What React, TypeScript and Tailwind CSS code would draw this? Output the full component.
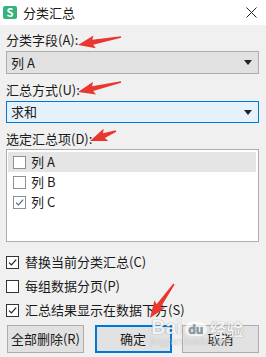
const font = '"Noto Sans CJK SC", "Liberation Sans", sans-serif';

function arrowPoints(tx: number, ty: number, px: number, py: number) {
  const dx = px - tx;
  const dy = py - ty;
  const len = Math.hypot(dx, dy);
  const ux = dx / len;
  const uy = dy / len;
  const nx = -uy;
  const ny = ux;
  const head = 15;
  const bx = px - ux * head;
  const by = py - uy * head;
  const pts = [
    [tx + nx * 0.8, ty + ny * 0.8],
    [bx + nx * 2.5, by + ny * 2.5],
    [bx - ux * 2 + nx * 6.5, by - uy * 2 + ny * 6.5],
    [px, py],
    [bx - ux * 2 - nx * 6.5, by - uy * 2 - ny * 6.5],
    [bx - nx * 2.5, by - ny * 2.5],
    [tx - nx * 0.8, ty - ny * 0.8],
  ];
  return pts.map((p) => p.join(",")).join(" ");
}

function Caret() {
  return (
    <svg width="8" height="5" viewBox="0 0 8 5">
      <path d="M0 0 H8 L4 5 Z" fill="#222" />
    </svg>
  );
}

function Check({ light }: { light?: boolean }) {
  return (
    <svg width="11" height="11" viewBox="0 0 11 11">
      <path
        d="M2 5.6 L4.4 8 L9.2 2.6"
        fill="none"
        stroke={light ? "#4a6a8a" : "#222"}
        strokeWidth="1.2"
      />
    </svg>
  );
}

function Box({ checked, light }: { checked?: boolean; light?: boolean }) {
  return (
    <div
      className={`w-[13px] h-[13px] bg-white border flex items-center justify-center ${
        light ? "border-[#8f8f8f]" : "border-[#333333]"
      }`}
    >
      {checked && <Check light={light} />}
    </div>
  );
}

function Option({ label, checked }: { label: string; checked?: boolean }) {
  return (
    <div className="h-[24px] flex items-center gap-[6px] text-[13px] text-[#1a1a1a]">
      <Box checked={checked} />
      <span>{label}</span>
    </div>
  );
}

function Btn({ label, focused }: { label: string; focused?: boolean }) {
  return (
    <div
      className={`w-[77px] h-[28px] flex items-center justify-center text-[13px] text-[#1a1a1a] bg-[#e1e1e1] ${
        focused ? "border-2 border-[#0078d7]" : "border border-[#adadad]"
      }`}
    >
      {label}
    </div>
  );
}

export default function App() {
  const arrows: [number, number, number, number][] = [
    [121, 37, 78, 45],
    [121, 82, 78, 92],
    [116, 131, 90, 141],
    [174, 284, 150, 318],
  ];

  return (
    <div
      className="relative w-[266px] h-[357px] bg-[#f0f0f0] overflow-hidden"
      style={{ fontFamily: font }}
    >
      {/* title bar */}
      <div className="h-[25px] bg-white flex items-center pl-[3px] pr-[9px]">
        <div className="w-[14px] h-[13px] rounded-[2px] bg-[#35b37b] flex items-center justify-center text-white text-[11px] leading-none font-bold">
          S
        </div>
        <span className="ml-[6px] text-[13px] text-[#1a1a1a]">分类汇总</span>
        <svg className="ml-auto" width="11" height="11" viewBox="0 0 11 11">
          <path d="M0.5 0.5 L10.5 10.5 M10.5 0.5 L0.5 10.5" stroke="#222" strokeWidth="1" />
        </svg>
      </div>

      <div className="pl-[6px] pr-[7px]">
        <div className="mt-[5px] h-[20px] leading-[20px] text-[13px] text-[#1a1a1a]">分类字段(A):</div>
        <div className="mt-[1px] h-[23px] bg-[#e1e1e1] border border-[#adadad] flex items-center pl-[4px] pr-[6px] text-[13px] text-[#1a1a1a]">
          <span>列 A</span>
          <span className="ml-auto flex">
            <Caret />
          </span>
        </div>

        <div className="mt-[6px] h-[20px] leading-[20px] text-[13px] text-[#1a1a1a]">汇总方式(U):</div>
        <div className="mt-[1px] h-[22px] bg-[#e5f1fb] border border-[#0078d7] flex items-center pl-[4px] pr-[6px] text-[13px] text-[#1a1a1a]">
          <span>求和</span>
          <span className="ml-auto flex">
            <Caret />
          </span>
        </div>

        <div className="mt-[6px] h-[20px] leading-[20px] text-[13px] text-[#1a1a1a]">选定汇总项(D):</div>
        <div className="h-[93px] bg-white border border-[#adadad] pt-[2px] pl-[1px] pr-[2px]">
          {[
            { label: "列 A", checked: false, sel: true },
            { label: "列 B", checked: false, sel: false },
            { label: "列 C", checked: true, sel: false },
          ].map((r) => (
            <div
              key={r.label}
              className={`h-[20px] flex items-center gap-[5px] pl-[5px] text-[13px] text-[#1a1a1a] ${
                r.sel ? "bg-[#e5e5e5]" : ""
              }`}
            >
              <Box checked={r.checked} light />
              <span>{r.label}</span>
            </div>
          ))}
        </div>

        <div className="mt-[8px] flex flex-col">
          <Option label="替换当前分类汇总(C)" checked />
          <Option label="每组数据分页(P)" />
          <Option label="汇总结果显示在数据下方(S)" checked />
        </div>

        <div className="mt-[3px] pl-[1px] flex justify-between">
          <Btn label="全部删除(R)" />
          <Btn label="确定" focused />
          <Btn label="取消" />
        </div>
      </div>

      {/* watermark */}
      <div className="absolute left-[151px] top-[317px] flex items-end gap-[3px] text-white/90 font-bold pointer-events-none [text-shadow:0_0_1px_rgba(0,0,0,0.5)]">
        <span className="text-[20px] leading-none" style={{ fontFamily: '"Liberation Sans", sans-serif' }}>
          Bai
        </span>
        <span className="text-[12px] leading-none mb-[1px] px-[3px] py-[1px] rounded-full bg-white/70 text-[#8a9aa8]">du</span>
        <span className="text-[17px] leading-none">经验</span>
      </div>
      <div
        className="absolute left-[150px] top-[337px] text-[10px] leading-none text-white/60 pointer-events-none [text-shadow:0_0_1px_rgba(0,0,0,0.25)]"
        style={{ fontFamily: '"Liberation Sans", sans-serif' }}
      >
        jingyan.baidu.com
      </div>

      {/* red annotation arrows */}
      <svg className="absolute inset-0 pointer-events-none" width="266" height="357">
        {arrows.map((a, i) => (
          <polygon key={i} points={arrowPoints(a[0], a[1], a[2], a[3])} fill="#e8372e" />
        ))}
      </svg>
    </div>
  );
}
